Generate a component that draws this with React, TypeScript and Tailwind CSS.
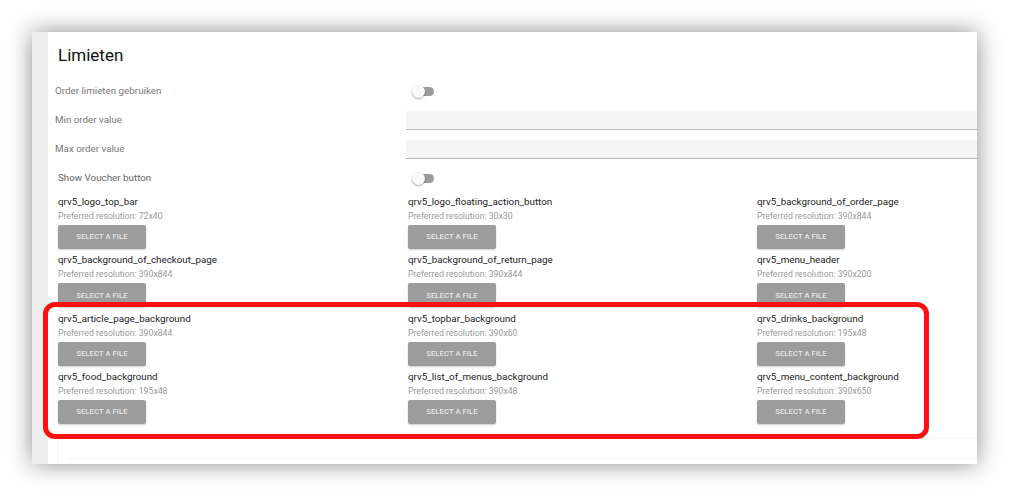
import React from "react";

const files = [
  { name: "qrv5_logo_top_bar", res: "72x40" },
  { name: "qrv5_logo_floating_action_button", res: "30x30" },
  { name: "qrv5_background_of_order_page", res: "390x844" },
  { name: "qrv5_background_of_checkout_page", res: "390x844" },
  { name: "qrv5_background_of_return_page", res: "390x844" },
  { name: "qrv5_menu_header", res: "390x200" },
  { name: "qrv5_article_page_background", res: "390x844" },
  { name: "qrv5_topbar_background", res: "390x60" },
  { name: "qrv5_drinks_background", res: "195x48" },
  { name: "qrv5_food_background", res: "195x48" },
  { name: "qrv5_list_of_menus_background", res: "390x48" },
  { name: "qrv5_menu_content_background", res: "390x650" },
];

function Toggle() {
  return (
    <div className="relative ml-[6px] h-[13px] w-[22px]">
      <div className="absolute left-[2px] top-[2px] h-[9px] w-[20px] rounded-full bg-[#9b9b9b]" />
      <div className="absolute left-0 top-0 h-[13px] w-[13px] rounded-full bg-[#fafafa] shadow-[0_1px_2px_rgba(0,0,0,0.35)]" />
    </div>
  );
}

function FileItem({ name, res }: { name: string; res: string }) {
  return (
    <div className="flex h-[58.4px] flex-col">
      <div className="h-[14px] text-[9.8px] leading-[14px] text-[#222]">{name}</div>
      <div className="h-[14px] text-[8.7px] leading-[14px] text-[#9a9a9a]">
        Preferred resolution: {res}
      </div>
      <button className="mt-[2px] flex h-[24px] w-[88px] items-center justify-center rounded-[2px] bg-[#9c9c9c] text-[7.6px] font-medium tracking-[0.1px] text-[#e6e6e6] shadow-[0_1px_2px_rgba(0,0,0,0.2)]">
        SELECT A FILE
      </button>
    </div>
  );
}

export default function App() {
  return (
    <div
      className="h-[496px] w-[1009px] overflow-hidden bg-white pl-[32px] pt-[32px]"
      style={{ fontFamily: "Roboto, 'Liberation Sans', sans-serif" }}
    >
      <div className="relative flex h-[432px] w-[945px] overflow-hidden bg-white shadow-[0_0_22px_rgba(0,0,0,0.45)]">
        <div className="w-[16px] shrink-0 bg-[#eeeeee]" />
        <div className="flex flex-1 flex-col">
          <h1 className="ml-[10px] mt-[11px] h-[24px] text-[17px] leading-[24px] text-[#111]">
            Limieten
          </h1>

          <div className="mt-[12px] flex h-[24px] items-center">
            <div className="w-[358px] pl-[7px] text-[9.8px] text-[#777]">Order limieten gebruiken</div>
            <Toggle />
          </div>

          <div className="mt-[8px] flex h-[19px] items-center">
            <div className="w-[358px] pl-[7px] text-[9.8px] text-[#777]">Min order value</div>
            <div className="h-[19px] flex-1 border-b border-[#b5b5b5] bg-[#f5f5f5]" />
          </div>

          <div className="mt-[10px] flex h-[19px] items-center">
            <div className="w-[358px] pl-[7px] text-[9.8px] text-[#777]">Max order value</div>
            <div className="h-[19px] flex-1 border-b border-[#b5b5b5] bg-[#f5f5f5]" />
          </div>

          <div className="mt-[7px] flex h-[24px] items-center">
            <div className="w-[358px] pl-[10px] text-[9.8px] text-[#666]">Show Voucher button</div>
            <Toggle />
          </div>

          <div className="mt-[5px] grid grid-cols-[350px_349px_1fr] pl-[10px]">
            {files.map((f) => (
              <FileItem key={f.name} name={f.name} res={f.res} />
            ))}
          </div>

          <div className="ml-[9px] mt-[9px] flex-1 border-l border-t border-[#f2f2f2] pl-[10px] pt-[19px]">
            <div className="border-t border-[#f2f2f2]" />
          </div>
        </div>

        <div className="pointer-events-none absolute left-[11px] top-[270px] h-[137px] w-[886px] rounded-[12px] border-[5px] border-[#ff1010]" />
      </div>
    </div>
  );
}
